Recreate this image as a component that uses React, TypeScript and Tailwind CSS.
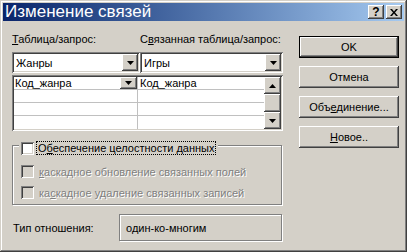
import React from "react";

const raised =
  "shadow-[inset_-1px_-1px_0_#404040,inset_1px_1px_0_#ffffff,inset_-2px_-2px_0_#808080,inset_2px_2px_0_#d4d0c8]";
const sunken =
  "shadow-[inset_1px_1px_0_#808080,inset_-1px_-1px_0_#ffffff,inset_2px_2px_0_#404040,inset_-2px_-2px_0_#d4d0c8]";

function Tri({ up = false }: { up?: boolean }) {
  return (
    <svg width="7" height="4" viewBox="0 0 7 4" className="block">
      {up ? <polygon points="3.5,0 7,4 0,4" fill="#000" /> : <polygon points="0,0 7,0 3.5,4" fill="#000" />}
    </svg>
  );
}

function ArrowBtn({ up = false, cls }: { up?: boolean; cls: string }) {
  return (
    <div className={`${cls} bg-[#d4d0c8] ${raised} flex items-center justify-center shrink-0`}>
      <Tri up={up} />
    </div>
  );
}

function Combo({ text, cls }: { text: string; cls: string }) {
  return (
    <div className={`${cls} h-[21px] bg-white ${sunken} flex items-center p-[2px]`}>
      <span className="flex-1 pl-[2px] leading-[14px]">{text}</span>
      <ArrowBtn cls="w-[16px] h-[17px]" />
    </div>
  );
}

function Check({ disabled = false }: { disabled?: boolean }) {
  return (
    <div
      className={`w-[13px] h-[13px] shrink-0 ${disabled ? "bg-[#d4d0c8]" : "bg-white"} ${sunken}`}
    />
  );
}

function Btn({ children, def = false }: { children: React.ReactNode; def?: boolean }) {
  if (def) {
    return (
      <div className="w-[100px] h-[22px] border border-black">
        <div className={`w-full h-full bg-[#d4d0c8] ${raised} flex items-center justify-center`}>
          {children}
        </div>
      </div>
    );
  }
  return (
    <div className={`w-[100px] h-[22px] bg-[#d4d0c8] ${raised} flex items-center justify-center`}>
      {children}
    </div>
  );
}

export default function App() {
  const dis = "text-[#808080] [text-shadow:1px_1px_0_#ffffff]";
  return (
    <div className="w-[407px] h-[252px] bg-[#d4d0c8] p-[2px] shadow-[inset_-1px_-1px_0_#404040,inset_1px_1px_0_#d4d0c8,inset_-2px_-2px_0_#808080,inset_2px_2px_0_#ffffff] font-['Liberation_Sans',Arial,sans-serif] text-[11px] leading-[14px] text-black flex flex-col overflow-hidden whitespace-nowrap">
      {/* Title bar */}
      <div className="mx-[1px] mt-[1px] h-[18px] bg-gradient-to-r from-[#0a246a] to-[#a6caf0] flex items-center pl-[2px] pr-[2px]">
        <span className="flex-1 text-white text-[17px] leading-[18px]">Изменение связей</span>
        <div className="flex gap-[2px]">
          <div className={`w-[16px] h-[14px] bg-[#d4d0c8] ${raised} flex items-center justify-center text-[12px] font-bold leading-none`}>?</div>
          <div className={`w-[16px] h-[14px] bg-[#d4d0c8] ${raised} flex items-center justify-center`}>
            <svg width="8" height="7" viewBox="0 0 8 7">
              <path d="M0 0h2l2 2.5L6 0h2L5 3.5 8 7H6L4 4.5 2 7H0l3-3.5z" fill="#000" />
            </svg>
          </div>
        </div>
      </div>

      {/* Body */}
      <div className="flex flex-1">
        {/* Left column */}
        <div className="ml-[10px] w-[271px] pt-[11px] flex flex-col">
          <div className="flex h-[14px]">
            <span className="w-[128px]">
              <span className="underline">Т</span>аблица/запрос:
            </span>
            <span>
              С<span className="underline">в</span>язанная таблица/запрос:
            </span>
          </div>
          <div className="flex mt-[6px]">
            <Combo text="Жанры" cls="w-[128px]" />
            <Combo text="Игры" cls="w-[143px]" />
          </div>
          {/* Grid */}
          <div className={`mt-[2px] h-[56px] bg-white ${sunken} p-[2px] flex`}>
            <div className="flex-1 flex flex-col">
              {[0, 1, 2, 3].map((i) => (
                <div key={i} className={`flex h-[13px] ${i < 3 ? "border-b border-[#c0c0c0]" : ""}`}>
                  <div className="w-[124px] border-r border-[#c0c0c0] flex items-center pl-[1px]">
                    {i === 0 && (
                      <>
                        <span className="flex-1 leading-[12px]">Код_жанра</span>
                        <ArrowBtn cls="w-[17px] h-[12px]" />
                      </>
                    )}
                  </div>
                  <div className="flex-1 flex items-center pl-[2px]">
                    {i === 0 && <span className="leading-[12px]">Код_жанра</span>}
                  </div>
                </div>
              ))}
            </div>
            <div className="w-[17px] flex flex-col">
              <ArrowBtn up cls="w-[17px] h-[17px]" />
              <div className={`w-[17px] h-[18px] bg-[#d4d0c8] ${raised}`} />
              <ArrowBtn cls="w-[17px] h-[17px]" />
            </div>
          </div>

          {/* Group box */}
          <div className="mt-[14px] w-[270px] h-[60px] border border-[#808080] shadow-[inset_1px_1px_0_#ffffff,1px_1px_0_#ffffff] flex flex-col">
            <div className="-mt-[5px] ml-[6px] self-start bg-[#d4d0c8] px-[2px] flex items-center h-[14px]">
              <Check />
              <span className="ml-[2px] px-[1px] border border-dotted border-black leading-[12px]">
                О<span className="underline">б</span>еспечение целостности данных
              </span>
            </div>
            <div className="ml-[8px] mt-[10px] flex items-center h-[13px]">
              <Check disabled />
              <span className={`ml-[5px] ${dis}`}>
                <span className="underline">к</span>аскадное обновление связанных полей
              </span>
            </div>
            <div className="ml-[8px] mt-[8px] flex items-center h-[13px]">
              <Check disabled />
              <span className={`ml-[5px] ${dis}`}>
                ка<span className="underline">с</span>кадное удаление связанных записей
              </span>
            </div>
          </div>

          {/* Relationship type */}
          <div className="mt-[9px] flex items-center">
            <span className="w-[107px] pl-[1px]">Тип отношения:</span>
            <div className="w-[163px] h-[27px] border border-[#808080] shadow-[inset_1px_1px_0_#ffffff,1px_1px_0_#ffffff] flex items-center pl-[6px]">
              один-ко-многим
            </div>
          </div>
        </div>

        {/* Right column */}
        <div className="ml-[16px] pt-[15px] flex flex-col gap-[8px]">
          <Btn def>OK</Btn>
          <Btn>Отмена</Btn>
          <Btn>
            <span>
              Объ<span className="underline">е</span>динение...
            </span>
          </Btn>
          <Btn>
            <span>
              <span className="underline">Н</span>овое..
            </span>
          </Btn>
        </div>
      </div>
    </div>
  );
}
